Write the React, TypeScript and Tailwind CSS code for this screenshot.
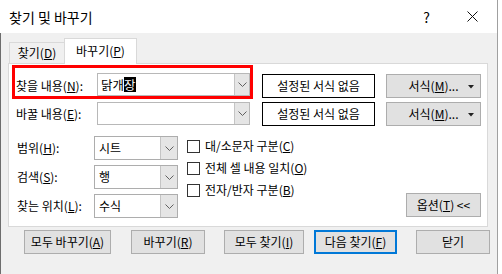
import React from "react";

function Chevron() {
  return (
    <svg width="9" height="5" viewBox="0 0 9 5">
      <path d="M0.5 0.5L4.5 4.5L8.5 0.5" fill="none" stroke="#606060" strokeWidth="1" />
    </svg>
  );
}

function DropBtn({ className }: { className: string }) {
  return (
    <div className={"flex items-center justify-center bg-[#e5e5e5] border-l border-[#c4c4c4] " + className}>
      <Chevron />
    </div>
  );
}

function Btn({ className, children }: { className: string; children: React.ReactNode }) {
  return (
    <div className={"flex items-center justify-center h-[24px] bg-[#e1e1e1] border border-[#adadad] text-[12px] leading-[16px] text-black " + className}>
      {children}
    </div>
  );
}

function Check({ children }: { children: React.ReactNode }) {
  return (
    <div className="flex items-center h-[22px]">
      <div className="w-[13px] h-[13px] border border-[#333] bg-white" />
      <span className="ml-[5px] text-[12px] leading-[16px]">{children}</span>
    </div>
  );
}

function SmallCombo({ text }: { text: string }) {
  return (
    <div className="flex w-[84px] h-[24px] border border-[#adadad] bg-white">
      <div className="flex-1 flex items-center pl-[4px] text-[12px] leading-[16px]">{text}</div>
      <DropBtn className="w-[17px]" />
    </div>
  );
}

export default function App() {
  return (
    <div className="w-[502px] h-[274px] bg-white font-['Noto_Sans_CJK_KR',sans-serif] text-black overflow-hidden">
      <div className="w-[498px] h-[274px] border-r border-[#a0a0a0] flex flex-col">
        {/* title bar */}
        <div className="h-[33px] bg-white flex items-center pl-[9px] shrink-0">
          <span className="text-[14px] leading-[18px]">찾기 및 바꾸기</span>
          <span className="ml-auto text-[14px] leading-[18px] mr-[37px]">?</span>
          <svg width="11" height="11" viewBox="0 0 11 11" className="mr-[19px]">
            <path d="M0.5 0.5L10.5 10.5M10.5 0.5L0.5 10.5" stroke="#111" strokeWidth="1" />
          </svg>
        </div>
        {/* body */}
        <div className="flex-1 bg-[#f0f0f0] border-l border-[#6d6d6d] flex flex-col">
          {/* tabs */}
          <div className="h-[30px] flex items-end pl-[8px]">
            <div className="w-[55px] h-[21px] border border-r-0 border-b-0 border-[#d9d9d9] flex items-center justify-center text-[12px] leading-[16px]">
              찾기(<u>D</u>)
            </div>
            <div className="relative z-10 -mb-px w-[73px] h-[26px] bg-white border border-b-0 border-[#d9d9d9] flex items-center justify-center text-[12px] leading-[16px] pb-[2px]">
              바꾸기(<u>P</u>)
            </div>
          </div>
          {/* panel */}
          <div className="relative ml-[7px] w-[480px] h-[164px] bg-white border border-[#d9d9d9] pt-[9px] pl-[7px] pr-[6px] flex flex-col">
            {/* row 1 */}
            <div className="flex items-start h-[24px]">
              <div className="w-[81px] h-[23px] flex items-center text-[12px] leading-[16px] pt-[2px]">
                찾을 내용(<u>N</u>):
              </div>
              <div className="flex w-[153px] h-[23px] border border-[#b8b8b8] bg-white">
                <div className="flex-1 flex items-center pl-[3px] text-[12.5px] leading-[15px]">
                  닭개<span className="bg-black text-white">장</span>
                </div>
                <DropBtn className="w-[15px]" />
              </div>
              <div className="ml-[12px] w-[113px] h-[24px] mt-px border border-black bg-white flex items-center justify-center text-[12px] leading-[16px]">
                설정된 서식 없음
              </div>
              <Btn className="ml-[11px] w-[95px] relative mt-px">
                서식(<u>M</u>)...
                <svg width="6" height="4" viewBox="0 0 6 4" className="absolute right-[6px] top-[10px]">
                  <path d="M0 0H6L3 3.5Z" fill="#222" />
                </svg>
              </Btn>
            </div>
            {/* row 2 */}
            <div className="flex items-start h-[24px] mt-[5px]">
              <div className="w-[81px] h-[23px] flex items-center text-[12px] leading-[16px]">
                바꿀 내용(<u>E</u>):
              </div>
              <div className="flex w-[153px] h-[23px] border border-[#b8b8b8] bg-white">
                <div className="flex-1" />
                <DropBtn className="w-[15px]" />
              </div>
              <div className="ml-[12px] w-[113px] h-[24px] border border-black bg-white flex items-center justify-center text-[12px] leading-[16px]">
                설정된 서식 없음
              </div>
              <Btn className="ml-[11px] w-[95px] relative">
                서식(<u>M</u>)...
                <svg width="6" height="4" viewBox="0 0 6 4" className="absolute right-[6px] top-[10px]">
                  <path d="M0 0H6L3 3.5Z" fill="#222" />
                </svg>
              </Btn>
            </div>
            {/* options */}
            <div className="flex mt-[10px] pl-[1px]">
              <div className="grid grid-cols-[77px_84px] gap-y-[5px]">
                <div className="flex items-center h-[24px] text-[12px] leading-[16px]">
                  범위(<u>H</u>):
                </div>
                <SmallCombo text="시트" />
                <div className="flex items-center h-[24px] text-[12px] leading-[16px]">
                  검색(<u>S</u>):
                </div>
                <SmallCombo text="행" />
                <div className="flex items-center h-[24px] text-[12px] leading-[16px]">
                  찾는 위치(<u>L</u>):
                </div>
                <SmallCombo text="수식" />
              </div>
              <div className="ml-[9px] -mt-px flex flex-col">
                <Check>대/소문자 구분(<u>C</u>)</Check>
                <Check>전체 셀 내용 일치(<u>O</u>)</Check>
                <Check>전자/반자 구분(<u>B</u>)</Check>
              </div>
              <Btn className="ml-auto self-end mb-[1px] w-[75px]">
                옵션(<u>T</u>) &lt;&lt;
              </Btn>
            </div>
            {/* red annotation */}
            <div className="absolute left-[3px] top-[1px] w-[241px] h-[34px] border-[3px] border-[#ff0000] pointer-events-none" />
          </div>
          {/* bottom buttons */}
          <div className="flex mt-[3px] pl-[23px]">
            <Btn className="w-[87px]">모두 바꾸기(<u>A</u>)</Btn>
            <Btn className="ml-[20px] w-[74px]">바꾸기(<u>R</u>)</Btn>
            <Btn className="ml-[19px] w-[80px]">모두 찾기(<u>I</u>)</Btn>
            <div className="ml-[10px] w-[83px] h-[24px] bg-[#e1e1e1] border-2 border-[#0078d7] flex items-center justify-center text-[12px] leading-[16px]">
              다음 찾기(<u>F</u>)
            </div>
            <Btn className="ml-[19px] w-[74px]">닫기</Btn>
          </div>
        </div>
      </div>
    </div>
  );
}
